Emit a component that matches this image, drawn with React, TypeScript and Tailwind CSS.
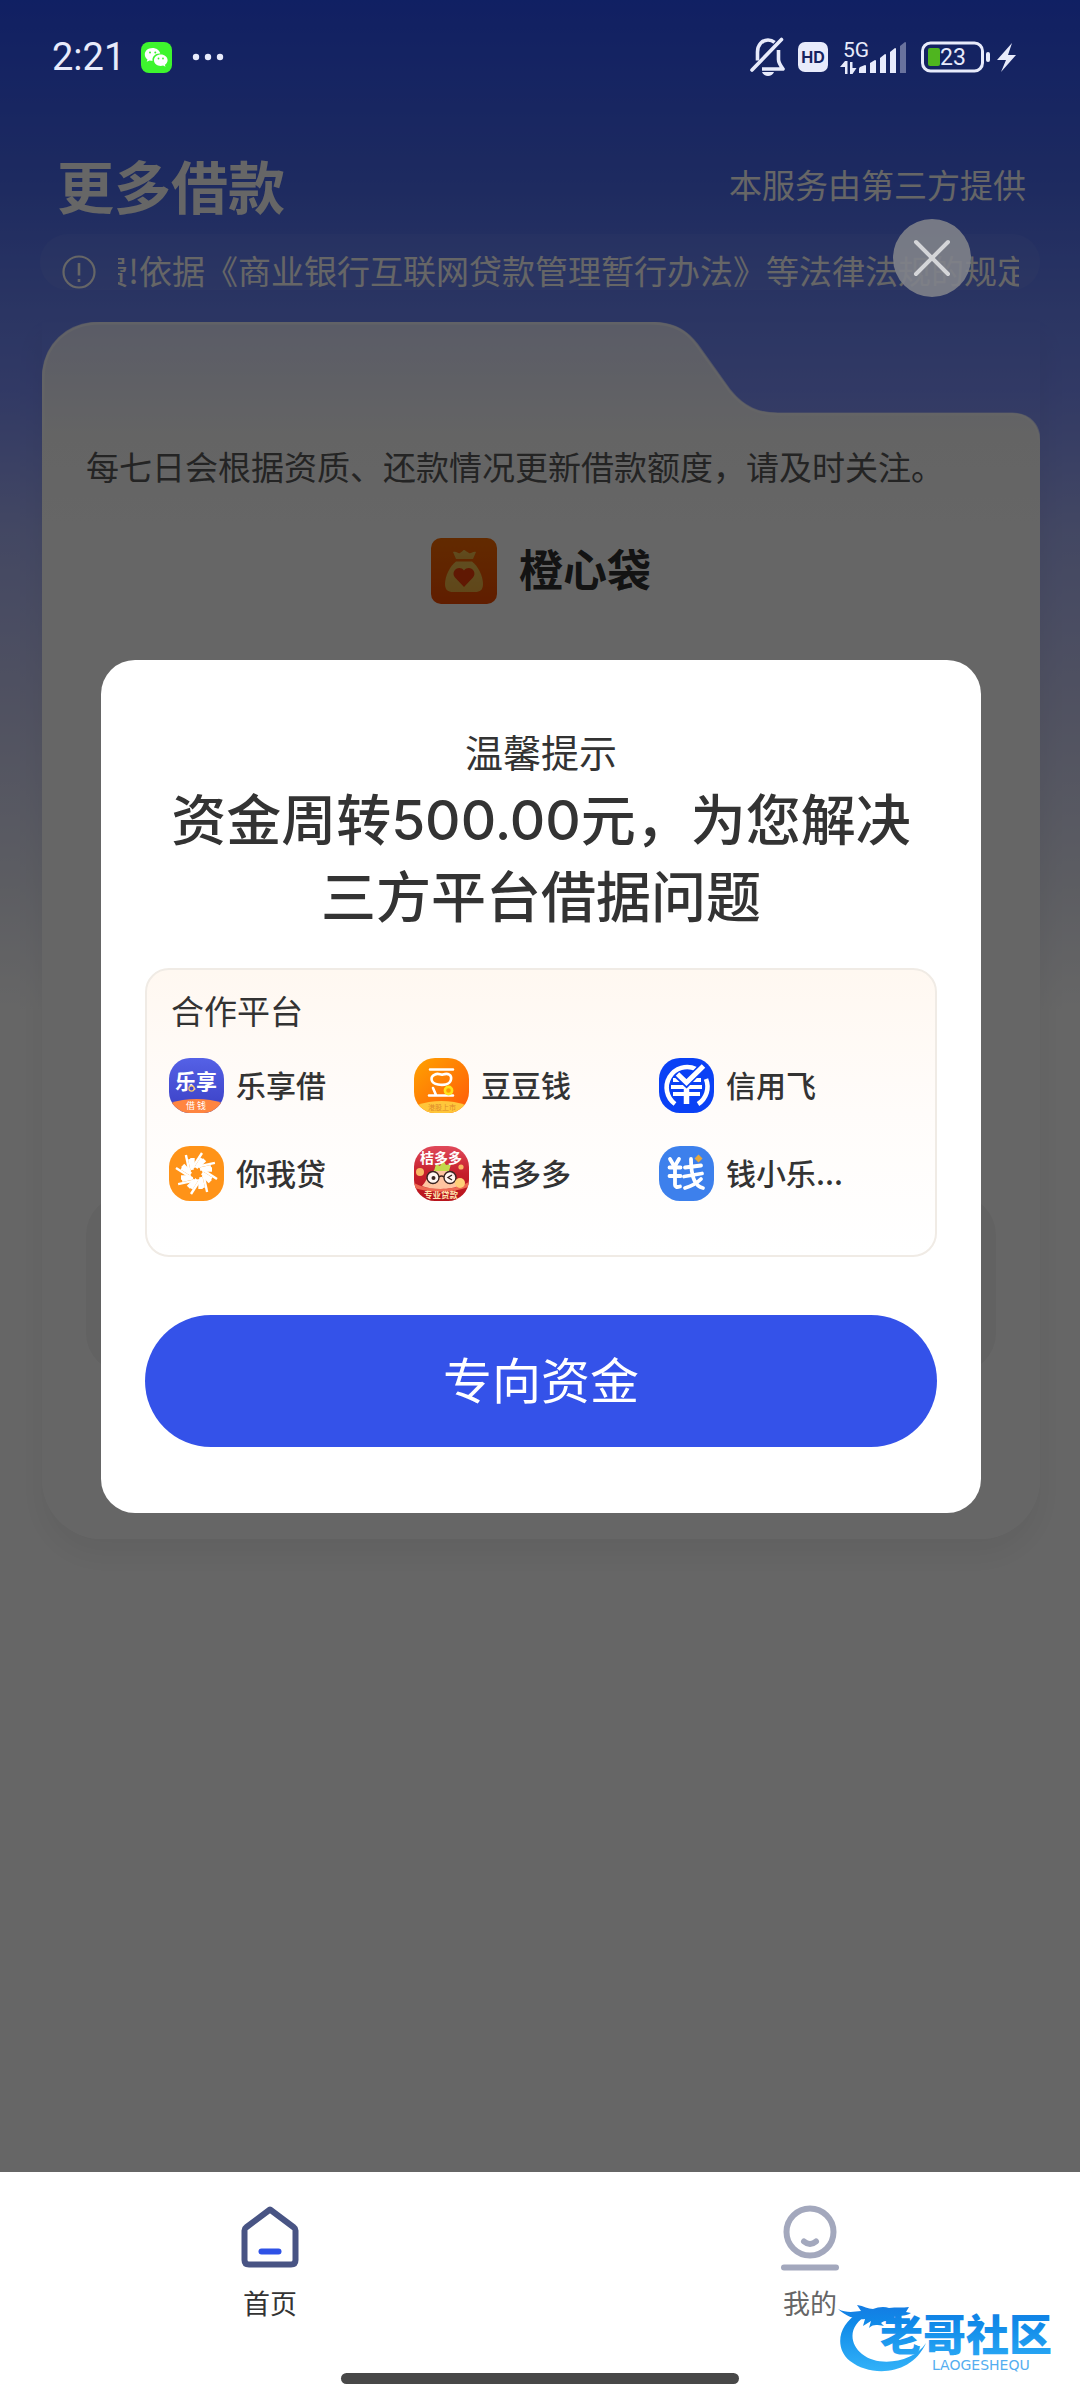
import type { ReactNode } from "react"

function StatusBar() {
  return (
    <div className="relative z-20 flex h-[114px] items-center justify-between pl-[52px] pr-[62px] text-[#e8ebfb]">
      <div className="flex items-center">
        <span className="font-[Roboto] text-[38px] leading-none">2:21</span>
        <svg className="ml-[16px] h-[31px] w-[31px]" viewBox="0 0 31 31" aria-label="WeChat">
          <rect width="31" height="31" rx="8" fill="#3ef52e" />
          <path
            d="M11.5 6C7 6 3.800 8.800 3.800 12.400c0 2 1 3.800 2.700 5l-.8 2.400 2.900-1.400c1 .3 1.900.4 3 .4-.9-4.400 3.200-7.800 7.700-7.300C18.500 8.200 15.200 6 11.500 6z"
            fill="#fff"
          />
          <path
            d="M19.800 12.500c-3.900 0-6.800 2.500-6.800 5.700s2.900 5.700 6.800 5.700c.8 0 1.600-.1 2.300-.3l2.400 1.200-.6-2c1.600-1.100 2.700-2.700 2.700-4.600 0-3.200-3-5.700-6.800-5.700z"
            fill="#fff"
          />
          <g fill="#3ef52e">
            <circle cx="9" cy="10.500" r="1" />
            <circle cx="14.300" cy="10.500" r="1" />
            <circle cx="17.500" cy="16.500" r=".9" />
            <circle cx="22" cy="16.500" r=".9" />
          </g>
        </svg>
        <svg className="ml-[20px] h-[8px] w-[32px]" viewBox="0 0 32 8" fill="currentColor">
          <circle cx="4" cy="4" r="3.200" />
          <circle cx="16" cy="4" r="3.200" />
          <circle cx="28" cy="4" r="3.200" />
        </svg>
      </div>

      <div className="flex items-center">
        <svg className="h-[40px] w-[36px]" viewBox="0 0 36 40" fill="none" stroke="currentColor" strokeWidth="3.600">
          <path d="M7.500 23.500V15c0-7 4.500-12 10.500-12 2.500 0 4.800.9 6.600 2.400M28.500 13v9.500c0 3 1.500 5.500 4.500 9.500H12" strokeLinejoin="round" />
          <path d="M2 33L31.500 2.500" strokeLinecap="round" />
          <path d="M12 35h12c-1 2.500-3.500 4-6 4s-5-1.500-6-4z" fill="currentColor" stroke="none" />
        </svg>
        <span className="ml-[12px] flex h-[30px] w-[30px] items-center justify-center rounded-[7px] bg-[#e8ebfb] font-[Inter] text-[16px] font-bold leading-none text-[#16235f]">
          HD
        </span>
        <svg className="ml-[12px] h-[36px] w-[68px]" viewBox="0 0 68 36" fill="currentColor">
          <text x="3" y="18" fontFamily="Roboto, sans-serif" fontSize="21">5G</text>
          <path d="M5 35V22l-5 6h5zM5 22h2.500v13H5zM10 23h2.500v12H10zM12.500 23v12l4-6h-4z" />
          <path d="M19 34v-4q0-1 1-2l5-2q1 0 1 1v7z" />
          <path d="M30 34V24l5-3q1 0 1 1v12z" />
          <path d="M40 34V19l5-4q1 0 1 1v18z" />
          <path d="M50 34V13l5-4q1 0 1 1v24z" />
          <path d="M60 34V7l5-4q1 0 1 1v30z" opacity=".4" />
        </svg>
        <svg className="ml-[13px] h-[32px] w-[97px]" viewBox="0 0 97 32">
          <rect x="1.500" y="2" width="60" height="28" rx="8" fill="none" stroke="currentColor" strokeWidth="3" />
          <rect x="7" y="7" width="12" height="18" rx="2" fill="#4fb51f" />
          <text x="19" y="24" fill="currentColor" fontFamily="Roboto, sans-serif" fontSize="23">23</text>
          <rect x="65" y="11" width="4" height="10" rx="2" fill="currentColor" />
          <path d="M91 2L76 19h9l-5 12 15-17h-8z" fill="currentColor" />
        </svg>
      </div>
    </div>
  )
}

function LoanCard() {
  return (
    <section className="ml-[42px] mr-[40px] rounded-b-[60px] shadow-[0_16px_30px_rgba(0,0,0,0.06)]">
      {/* folder tab edge */}
      <svg className="block h-[118px] w-full" viewBox="0 0 998 118" preserveAspectRatio="none">
        <defs>
          <linearGradient id="tab" x1="0" y1="0" x2="0" y2="1">
            <stop offset="0" stopColor="#e1e5ff" />
            <stop offset="1" stopColor="#fbfbfb" />
          </linearGradient>
        </defs>
        <path
          d="M0 119V58C0 22 26 0 58 0H608C634 0 646 10 655 22L688 68C702 85 716 91 736 91H970C988 91 998 104 998 119Z"
          fill="url(#tab)"
        />
        <path
          d="M1 118V58C1 22 26 1 58 1H608C634 1 646 11 655 23L688 69C702 86 716 92 736 92H970C988 92 997 104 997 118"
          fill="none"
          stroke="#fff"
          strokeOpacity=".6"
          strokeWidth="3"
        />
      </svg>
      <div className="rounded-b-[60px] bg-gradient-to-b from-[#fbfbfb] to-white to-10% px-[44px] pb-[166px] pt-[4px]">
        <p className="text-[33px] leading-[44px] text-[#5a5a5a]">每七日会根据资质、还款情况更新借款额度，请及时关注。</p>
        <div className="mt-[50px] flex items-center justify-center gap-[22px]">
          <svg className="h-[66px] w-[66px]" viewBox="0 0 66 66">
            <defs>
              <linearGradient id="bagBg" x1="0" y1="0" x2="0" y2="1">
                <stop offset="0" stopColor="#f56a00" />
                <stop offset="1" stopColor="#f04a00" />
              </linearGradient>
              <linearGradient id="bag" x1="0" y1="0" x2="0" y2="1">
                <stop offset="0" stopColor="#f0c050" />
                <stop offset="1" stopColor="#f0b040" />
              </linearGradient>
            </defs>
            <rect width="66" height="66" rx="10" fill="url(#bagBg)" />
            <path d="M22 14c4-1 5 2 7 1s3-3 4-3 3 2 5 3 4-2 7-1l-3 7H25z" fill="url(#bag)" />
            <path d="M25 23.500h16C47 28 52 38 52 46c0 6-3 8-8 8H22c-5 0-8-2-8-8 0-8 5-18 11-22.500z" fill="url(#bag)" />
            <path d="M33 49L24 39.500c-5-6 4-13.500 9-7 5-6.500 14 1 9 7z" fill="#f03c08" />
          </svg>
          <h2 className="pb-[6px] text-[44px] font-bold leading-[60px] text-[#303030]">橙心袋</h2>
        </div>
        <div className="mt-[591px] h-[178px] rounded-[40px] bg-[#f5f5f5]" />
      </div>
    </section>
  )
}

function AppIcon({ id, children }: { id: string; children: ReactNode }) {
  return (
    <svg className="h-[55px] w-[55px] shrink-0" viewBox="0 0 55 55" aria-hidden="true">
      <defs>
        <clipPath id={id}>
          <rect width="55" height="55" rx="21" />
        </clipPath>
        <linearGradient id={id + "-blue"} x1="0" y1="0" x2="0" y2="1">
          <stop offset="0" stopColor="#5561e6" />
          <stop offset="1" stopColor="#3a3fc4" />
        </linearGradient>
        <linearGradient id={id + "-orange"} x1="0" y1="0" x2="1" y2="1">
          <stop offset="0" stopColor="#ffa200" />
          <stop offset="1" stopColor="#ff5a0a" />
        </linearGradient>
        <linearGradient id={id + "-red"} x1="0" y1="0" x2="0" y2="1">
          <stop offset="0" stopColor="#e0495a" />
          <stop offset="0.500" stopColor="#c51f2b" />
          <stop offset="1" stopColor="#b8141c" />
        </linearGradient>
      </defs>
      <g clipPath={`url(#${id})`}>{children}</g>
    </svg>
  )
}

const cjk = "Noto Sans CJK SC, sans-serif"

const platforms = [
  {
    name: "乐享借",
    icon: (
      <AppIcon id="lexiang">
        <rect width="55" height="55" fill="url(#lexiang-blue)" />
        <text x="6" y="31" fill="#fff" fontFamily={cjk} fontSize="21" fontWeight="700">乐享</text>
        <ellipse cx="27.500" cy="55" rx="36" ry="14" fill="#ff8540" />
        <text x="17" y="51" fill="#fff" fontFamily={cjk} fontSize="9">借 钱</text>
        <circle cx="22.500" cy="30.500" r="2.600" fill="#4349cf" stroke="#f3c86a" strokeWidth="1.200" />
      </AppIcon>
    ),
  },
  {
    name: "豆豆钱",
    icon: (
      <AppIcon id="doudou">
        <rect width="55" height="55" fill="url(#doudou-orange)" />
        <g fill="none" stroke="#fff" strokeWidth="2.600" strokeLinecap="round" strokeLinejoin="round">
          <path d="M16 11.500h23M15 37.500h24M19 30l3 7" />
          <path d="M21 16.500c4-2 5 1 8 0 5-1.500 9 0 8 5s-7 6-13 5c-8-1-8-8-3-10z" />
        </g>
        <circle cx="34.500" cy="32.500" r="3.600" fill="#ff9c00" stroke="#ffe11d" strokeWidth="2.600" />
        <ellipse cx="27.500" cy="56" rx="33" ry="13" fill="#ffc63a" />
        <text x="14" y="52" fill="#e08a2a" fontFamily={cjk} fontSize="7">港股上市</text>
      </AppIcon>
    ),
  },
  {
    name: "信用飞",
    icon: (
      <AppIcon id="xinyong">
        <rect width="55" height="55" fill="#0a41f5" />
        <path d="M16 46A20.500 20.500 0 0 1 37 11M47 21A20.500 20.500 0 0 1 39 46" fill="none" stroke="#fff" strokeWidth="4.600" />
        <path d="M14 22h28M12 29h31M14 36h27" stroke="#fff" strokeWidth="4" />
        <path d="M27.500 24v22" stroke="#fff" strokeWidth="5.500" />
        <path d="M18 16l9.500 9L45 7" fill="none" stroke="#0a41f5" strokeWidth="8" />
        <path d="M18.500 16l9 8.500L44.500 8" fill="none" stroke="#fff" strokeWidth="5" />
      </AppIcon>
    ),
  },
  {
    name: "你我贷",
    icon: (
      <AppIcon id="niwo">
        <rect width="55" height="55" fill="#ff9318" />
        {[0, 45, 90, 135, 180, 225, 270, 315].map((angle) => (
          <g key={angle} transform={`rotate(${angle} 27.500 27.500)`} stroke="#fff" fill="none">
            <path d="M24 21L33 7" strokeWidth="2.400" />
            <path d="M27 22L33 12.500" strokeWidth="3.600" />
            <path d="M23.500 22V12" strokeWidth="4.400" />
          </g>
        ))}
        <path d="M27.500 22.500l1.500 3 3.500-.5-2 3 2 3-3.500-.5-1.500 3-1.500-3-3.500.5 2-3-2-3 3.500.5z" fill="#ff9318" />
      </AppIcon>
    ),
  },
  {
    name: "桔多多",
    icon: (
      <AppIcon id="juduo">
        <rect width="55" height="55" fill="url(#juduo-red)" />
        <path d="M0 37c14 8 40 8 55-1l-1 5c-14 6-38 6-54 1z" fill="#ee6a52" />
        <path d="M8 40c4-3 8-18 19-18s15 14 19 17c-8 5-28 5-38 1z" fill="#ffc4a0" />
        <path d="M20 25l2-7 4 2 3-6 3 5 5-1-2 7z" fill="#c3d94c" />
        <text x="6" y="17" fill="#fff" fontFamily={cjk} fontSize="14" fontWeight="700">桔多多</text>
        <g fill="#fff" fillOpacity=".85" stroke="#3a2420" strokeWidth="1.400">
          <circle cx="19" cy="31.500" r="6" />
          <circle cx="36" cy="31.500" r="6" />
          <path d="M25 31q2.500-2 5 0" fill="none" />
        </g>
        <circle cx="19.500" cy="32" r="2" fill="#3a2420" />
        <path d="M38 29l-4 2.500 4 2.500" fill="none" stroke="#3a2420" strokeWidth="1.400" />
        <circle cx="6" cy="26" r="4" fill="#f8b765" />
        <circle cx="47" cy="21" r="2.600" fill="#f8b765" />
        <circle cx="46" cy="37" r="5" fill="#ffd078" />
        <text x="10" y="51.500" fill="#ffe6b0" fontFamily={cjk} fontSize="8.500" fontWeight="700">专业贷款</text>
      </AppIcon>
    ),
  },
  {
    name: "钱小乐...",
    icon: (
      <AppIcon id="qianxiao">
        <rect width="55" height="55" fill="#3d80ec" />
        <g fill="none" stroke="#fff" strokeWidth="3.800" strokeLinecap="round" strokeLinejoin="round">
          <path d="M11 13l3.500 6M20 13l-3.500 6M10.500 21.500h11M10.500 30h11M16 21v18q0 3 5 1.500" />
          <path d="M26 21.500l16-2M25 30.500l18-3M32 13c0 14 2 27 12 29M42 33c-4 4-9 7-16 9" />
        </g>
        <path d="M39.500 8.500l4 4-4 4-4-4z" fill="#e6a83c" />
      </AppIcon>
    ),
  },
]

function FundsDialog() {
  return (
    <div className="absolute inset-0 z-10 flex flex-col bg-black/60 pl-[101px] pr-[99px] pt-[219px]">
      <button
        type="button"
        aria-label="关闭"
        className="mr-[10px] flex h-[78px] w-[78px] items-center justify-center self-end rounded-full bg-[#808289]/90"
      >
        <svg className="h-[40px] w-[40px]" viewBox="0 0 40 40" stroke="#d4d5d8" strokeWidth="4" strokeLinecap="round">
          <path d="M4 4l32 32M36 4L4 36" />
        </svg>
      </button>

      <div role="dialog" aria-labelledby="dialog-title" className="mt-[363px] rounded-[34px] bg-white px-[44px] pb-[66px] pt-[63px] text-[#333]">
        <p className="text-center text-[38px] leading-[56px]">温馨提示</p>
        <h2 id="dialog-title" className="mt-[3px] text-center font-[Inter,'Noto_Sans_CJK_SC',sans-serif] text-[55px] font-medium leading-[77px]">
          资金周转500.00元，为您解决三方平台借据问题
        </h2>

        <div className="mt-[32px] rounded-[24px] border-2 border-[#f0ebe5] bg-gradient-to-b from-[#fff8f1] via-[#fffcfa] to-white pb-[54px] pl-[22px] pr-[31px] pt-[18px]">
          <h3 className="pl-[2px] text-[33px] leading-[44px]">合作平台</h3>
          <ul className="mt-[26px] grid grid-cols-3 gap-y-[33px]">
            {platforms.map((p) => (
              <li key={p.name} className="flex h-[55px] items-center gap-[12px]">
                {p.icon}
                <span className="pb-[3px] text-[30px] font-medium leading-[52px]">{p.name}</span>
              </li>
            ))}
          </ul>
        </div>

        <button type="button" className="mt-[58px] h-[132px] w-full rounded-full bg-[#3452e9] pb-[6px] text-[49px] text-white">
          专向资金
        </button>
      </div>
    </div>
  )
}

function Watermark() {
  return (
    <div className="pointer-events-none absolute bottom-[24px] right-[16px] z-30">
      <svg className="h-[82px] w-[226px]" viewBox="0 0 226 82">
        <defs>
          <linearGradient id="wave" x1="0" y1="0" x2="0" y2="82" gradientUnits="userSpaceOnUse">
            <stop offset="0" stopColor="#1674e0" />
            <stop offset="0.350" stopColor="#1089e8" />
            <stop offset="1" stopColor="#35b6fa" />
          </linearGradient>
        </defs>
        <g fill="url(#wave)">
          <path d="M21 19C0 30-4 54 12 67c22 17 62 14 76-18C76 68 41 74 24 60 10 49 11 30 30 21z" />
          <path d="M0 15c8 4 15 3 23 2l-4-6c7 1 11 4 16 4 5-2 11-3 16-1 7-1 14 0 20-1l-3 5 5 1c-6 4-13 2-17 4l6 3c-8 3-14-1-19 3l3 3c-8-1-10-2-15 2l2-7-8 5 2-7c-9 1-18-2-27-10z" />
          <text x="42" y="57" fontFamily={cjk} fontSize="43" fontWeight="900">老哥社区</text>
        </g>
        <text x="94" y="76" fill="#55aef0" fontFamily="DejaVu Sans, sans-serif" fontSize="14">LAOGESHEQU</text>
      </svg>
    </div>
  )
}

function TabBar() {
  return (
    <nav className="relative bg-white">
      <div className="grid grid-cols-2">
        <a href="#home" className="flex flex-col items-center pt-[31px] text-[27px] leading-[40px] text-[#333]">
          <svg className="h-[68px] w-[64px]" viewBox="0 0 64 68" fill="none">
            <path
              d="M32 6.500L56 24.500q1.500 1 1.500 3V57q0 4.500-4.500 4.500H11q-4.500 0-4.500-4.500V27.500q0-2 1.500-3z"
              stroke="#485484"
              strokeWidth="6"
              strokeLinejoin="round"
            />
            <path d="M23.500 48.500h17" stroke="#2f52e6" strokeWidth="6" strokeLinecap="round" />
          </svg>
          <span className="mt-[12px]">首页</span>
        </a>
        <a href="#mine" className="flex flex-col items-center pt-[31px] text-[27px] leading-[40px] text-[#666]">
          <svg className="h-[68px] w-[64px]" viewBox="0 0 64 68" fill="none" stroke="#a3a8bd">
            <circle cx="32" cy="29" r="23.500" strokeWidth="6" />
            <path d="M26 38.500q6 5 12 0" strokeWidth="6" strokeLinecap="round" />
            <path d="M6 64.500h52" strokeWidth="6" strokeLinecap="round" />
          </svg>
          <span className="mt-[12px]">我的</span>
        </a>
      </div>
      <div className="mx-auto mb-[16px] mt-[50px] h-[11px] w-[398px] rounded-full bg-[#484848]" />
      <Watermark />
    </nav>
  )
}

export default function App() {
  return (
    <div className="flex min-h-screen flex-col bg-white font-['Noto_Sans_CJK_SC',sans-serif]">
      <main className="relative flex-1 bg-[linear-gradient(180deg,#2a50f7_0px,#4a6af0_180px,#6b85f7_310px,#7c90fc_390px,#a7b2f7_530px,#c7cbf2_700px,#e6e8f5_880px,#fff_1010px)]">
        <StatusBar />
        <header className="flex items-center justify-between pl-[57px] pr-[54px] pt-[28px]">
          <h1 className="text-[57px] font-bold leading-[84px] text-white">更多借款</h1>
          <span className="text-[33px] leading-[44px] text-white">本服务由第三方提供</span>
        </header>
        <div className="mx-[40px] mt-[8px] flex h-[56px] items-end rounded-[28px] bg-white/5 pl-[21px] pr-[21px] text-white">
          <svg className="h-[36px] w-[36px] shrink-0" viewBox="0 0 36 36" fill="none" stroke="currentColor" strokeWidth="2.200">
            <circle cx="18" cy="18" r="15.500" />
            <path d="M18 9v12.500M18 25v3" strokeWidth="2.600" />
          </svg>
          <div className="ml-[21px] flex h-[44px] flex-1 justify-end overflow-hidden">
            <p className="-mr-[11px] whitespace-nowrap text-[33px] leading-[48px]">
              费!依据《商业银行互联网贷款管理暂行办法》等法律法规的规定
            </p>
          </div>
        </div>
        <div className="pt-[32px]">
          <LoanCard />
        </div>
        <FundsDialog />
      </main>
      <TabBar />
    </div>
  )
}
